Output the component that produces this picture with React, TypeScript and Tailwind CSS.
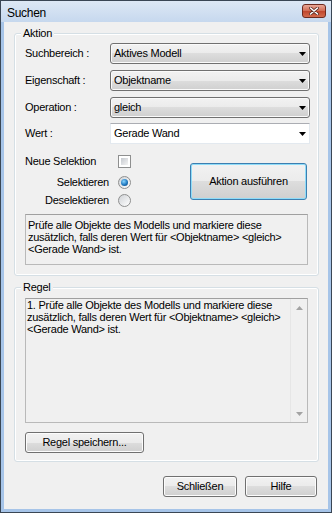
import clsx from 'clsx';

const btn =
  'flex items-center justify-center rounded-[3px] border border-[#707070] bg-[linear-gradient(#f2f2f2,#ebebeb_50%,#dddddd_50%,#cfcfcf)] shadow-[inset_0_0_0_1px_#fcfcfc]';

function Arrow({ color = '#000' }: { color?: string }) {
  return (
    <svg width="7" height="4" viewBox="0 0 7 4" className="shrink-0">
      <polygon points="0,0 7,0 3.5,4" fill={color} />
    </svg>
  );
}

function Combo({ text, white }: { text: string; white?: boolean }) {
  return (
    <div
      className={clsx(
        'flex h-[21px] w-[200px] items-center justify-between pl-[3px] pr-[3px]',
        white
          ? 'border border-[#e3e9ef] border-t-[#abadb3] bg-white'
          : 'rounded-[3px] border border-[#707070] bg-[linear-gradient(#f2f2f2,#ebebeb_50%,#dddddd_50%,#cfcfcf)] shadow-[inset_0_0_0_1px_#fafafa]'
      )}
    >
      <span>{text}</span>
      <Arrow />
    </div>
  );
}

function Row({ label, children, className }: { label: string; children: React.ReactNode; className?: string }) {
  return (
    <div className={clsx('flex items-center', className)}>
      <span className="w-[85px]">{label}</span>
      {children}
    </div>
  );
}

function Radio({ checked }: { checked?: boolean }) {
  return (
    <span className="flex h-[13px] w-[13px] items-center justify-center rounded-full border border-[#8e8f8f] bg-[linear-gradient(135deg,#cfd2d6,#ffffff)]">
      {checked && (
        <span className="h-[7px] w-[7px] rounded-full bg-[radial-gradient(circle_at_40%_35%,#8ad6ff,#1f78c0_55%,#0b3f70)]" />
      )}
    </span>
  );
}

function Group({ title, children, className }: { title: string; children: React.ReactNode; className?: string }) {
  return (
    <div className={clsx('ml-[10px] w-[305px] rounded-[3px] border border-[#d5dfe5] shadow-[inset_0_0_0_1px_#fff]', className)}>
      <div className="-mt-[7px] ml-[6px] w-fit bg-[#f0f0f0] px-[2px] leading-[13px]">{title}</div>
      {children}
    </div>
  );
}

export default function App() {
  return (
    <div className="flex h-[513px] w-[332px] flex-col border border-[#3a4654] bg-[#a6c4e8] font-['Liberation_Sans',Arial,sans-serif] text-[11px] leading-[13px] tracking-[-0.25px] text-black">
      {/* title bar */}
      <div className="flex h-[21px] shrink-0 items-start justify-between bg-[linear-gradient(#dde8f5,#c6d8ee)] pl-[6px] pr-[5px]">
        <span className="mt-[6px] text-[12px] tracking-[-0.3px]">Suchen</span>
        <div className="mt-[3px] flex h-[14px] w-[24px] items-center justify-center rounded-[3px] border border-[#6e2a1f] bg-[linear-gradient(#e9a898,#d16a53_50%,#c0452c_50%,#d36b4e)]">
          <svg width="10" height="8" viewBox="0 0 10 8">
            <path d="M1.5 1 L8.5 7 M8.5 1 L1.5 7" stroke="#5a2a22" strokeWidth="3" strokeLinecap="round" />
            <path d="M1.5 1 L8.5 7 M8.5 1 L1.5 7" stroke="#fff" strokeWidth="1.6" strokeLinecap="round" />
          </svg>
        </div>
      </div>

      {/* client */}
      <div className="mx-[3px] mb-[3px] flex flex-1 flex-col bg-[#f0f0f0]">
        <Group title="Aktion" className="mt-[11px] pb-[10px]">
          <div className="pl-[10px]">
            <Row label="Suchbereich :" className="mt-[3px]">
              <Combo text="Aktives Modell" />
            </Row>
            <Row label="Eigenschaft :" className="mt-[6px]">
              <Combo text="Objektname" />
            </Row>
            <Row label="Operation :" className="mt-[6px]">
              <Combo text="gleich" />
            </Row>
            <Row label="Wert :" className="mt-[5px]">
              <Combo text="Gerade Wand" white />
            </Row>

            <div className="mt-[11px] flex">
              <div className="w-[165px]">
                <div className="flex h-[13px] items-center">
                  <span className="w-[93px]">Neue Selektion</span>
                  <span className="h-[13px] w-[13px] border border-[#8e8f8f] bg-white p-[2px]">
                    <span className="block h-full w-full bg-[linear-gradient(135deg,#c5c9cf,#f4f4f4)]" />
                  </span>
                </div>
                <div className="mt-[8px] flex h-[13px] items-center">
                  <span className="w-[84px] text-right">Selektieren</span>
                  <span className="ml-[9px]">
                    <Radio checked />
                  </span>
                </div>
                <div className="mt-[5px] flex h-[13px] items-center">
                  <span className="w-[84px] text-right">Deselektieren</span>
                  <span className="ml-[9px]">
                    <Radio />
                  </span>
                </div>
              </div>
              <div className="mt-[8px] flex h-[37px] w-[117px] items-center justify-center rounded-[3px] border border-[#3c7fb1] bg-[linear-gradient(#f2f2f2,#ebebeb_50%,#dddddd_50%,#cfcfcf)] shadow-[inset_0_0_0_1px_#8fdcf8]">
                Aktion ausführen
              </div>
            </div>

            <div className="mt-[7px] h-[51px] w-[283px] border border-[#b9b9b9] border-t-[#a0a0a0] pl-[2px] pt-[4px] leading-[12px]">
              Prüfe alle Objekte des Modells und markiere diese zusätzlich, falls deren Wert für &lt;Objektname&gt; &lt;gleich&gt; &lt;Gerade Wand&gt; ist.
            </div>
          </div>
        </Group>

        <Group title="Regel" className="mt-[11px] pb-[8px]">
          <div className="pl-[10px]">
            <div className="mt-[4px] flex h-[125px] w-[283px] border border-[#b9b9b9] border-t-[#a0a0a0]">
              <div className="flex-1 pl-[1px] pr-[4px] leading-[12px]">
                1. Prüfe alle Objekte des Modells und markiere diese zusätzlich, falls deren Wert für &lt;Objektname&gt; &lt;gleich&gt; &lt;Gerade Wand&gt; ist.
              </div>
              <div className="flex w-[17px] flex-col justify-between border-l border-[#e6e6e6]">
                <div className="flex h-[17px] items-center justify-center">
                  <svg width="7" height="4" viewBox="0 0 7 4">
                    <polygon points="0,4 7,4 3.5,0" fill="#a3a3a3" />
                  </svg>
                </div>
                <div className="flex h-[17px] items-center justify-center">
                  <Arrow color="#a3a3a3" />
                </div>
              </div>
            </div>
            <div className={clsx(btn, 'mt-[9px] h-[21px] w-[119px]')}>Regel speichern...</div>
          </div>
        </Group>

        <div className="mt-[14px] flex justify-end gap-[8px] pr-[11px]">
          <div className={clsx(btn, 'h-[21px] w-[74px]')}>Schließen</div>
          <div className={clsx(btn, 'h-[21px] w-[72px]')}>Hilfe</div>
        </div>
      </div>
    </div>
  );
}
